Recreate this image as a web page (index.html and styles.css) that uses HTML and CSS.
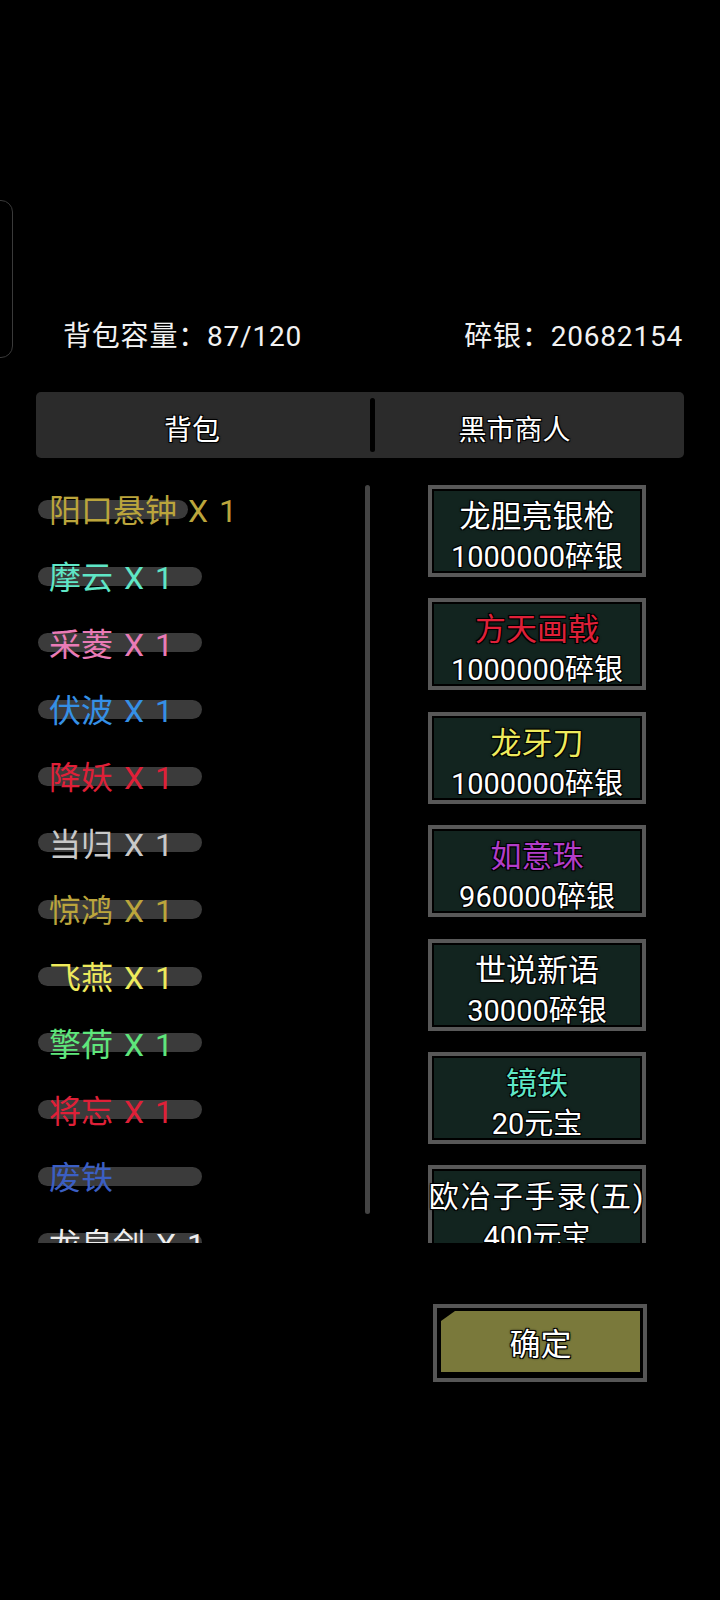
FILE: index.html
```html
<html>
<head>
    <meta charset="utf-8">
    <title>背包 - 黑市商人</title>
    <link rel="stylesheet" href="styles.css">
</head>
<body>
    <div class="edgeHandle"></div>

    <div class="stats">
        <div class="capacity">背包容量：87/120</div>
        <div class="silver">碎银：20682154</div>
    </div>

    <div class="tabs">
        <div class="tab tabBag">背包</div>
        <div class="tabDivider"></div>
        <div class="tab tabShop">黑市商人</div>
    </div>

    <div class="panel">
        <div class="list">
            <div class="item"><span class="pill pillShort"></span><span class="name gold">阳口悬钟 X 1</span></div>
            <div class="item"><span class="pill"></span><span class="name cyan">摩云 X 1</span></div>
            <div class="item"><span class="pill"></span><span class="name pink">采菱 X 1</span></div>
            <div class="item"><span class="pill"></span><span class="name blue">伏波 X 1</span></div>
            <div class="item"><span class="pill"></span><span class="name red">降妖 X 1</span></div>
            <div class="item"><span class="pill"></span><span class="name grey">当归 X 1</span></div>
            <div class="item"><span class="pill"></span><span class="name gold">惊鸿 X 1</span></div>
            <div class="item"><span class="pill"></span><span class="name yellow">飞燕 X 1</span></div>
            <div class="item"><span class="pill"></span><span class="name green">擎荷 X 1</span></div>
            <div class="item"><span class="pill"></span><span class="name red">将忘 X 1</span></div>
            <div class="item"><span class="pill"></span><span class="name navy">废铁</span></div>
            <div class="item"><span class="pill"></span><span class="name white">龙泉剑 X 1</span></div>
        </div>
        <div class="scrollbar"></div>

        <div class="shop">
            <div class="card">
                <div class="cardName">龙胆亮银枪</div>
                <div class="cardPrice">1000000碎银</div>
            </div>
            <div class="card">
                <div class="cardName red">方天画戟</div>
                <div class="cardPrice">1000000碎银</div>
            </div>
            <div class="card">
                <div class="cardName yellow">龙牙刀</div>
                <div class="cardPrice">1000000碎银</div>
            </div>
            <div class="card">
                <div class="cardName purple">如意珠</div>
                <div class="cardPrice">960000碎银</div>
            </div>
            <div class="card">
                <div class="cardName">世说新语</div>
                <div class="cardPrice">30000碎银</div>
            </div>
            <div class="card">
                <div class="cardName cyan">镜铁</div>
                <div class="cardPrice">20元宝</div>
            </div>
            <div class="card">
                <div class="cardName long">欧冶子手录(五)</div>
                <div class="cardPrice">400元宝</div>
            </div>
        </div>
    </div>

    <div class="actions">
        <div class="confirm">
            <div class="confirmFace">确定</div>
        </div>
    </div>
</body>
</html>
```

FILE: styles.css
```css
* {font-family: Roboto, "Noto Sans CJK SC", sans-serif;}
body {margin: 0; background-color: #000; color: #eee; width: 720px; height: 1600px; overflow: hidden;}

.edgeHandle {
    position: absolute;
    left: -20px;
    top: 200px;
    width: 31px;
    height: 156px;
    border: 1px solid #3a3a3a;
    border-radius: 12px;
}

.stats {
    display: flex;
    justify-content: space-between;
    padding: 320px 37px 0 63px;
    font-size: 28px;
    letter-spacing: 0.8px;
    line-height: 34px;
    color: #f2f2f2;
}

.tabs {
    display: flex;
    align-items: center;
    margin: 38px 36px 0;
    height: 66px;
    background-color: #2b2b2b;
    border-radius: 5px;
}
.tab {
    font-size: 28px;
    color: #fff;
    text-align: center;
    padding-top: 6px;
    text-shadow: 1px 1px 0 #000, -1px -1px 0 #000, 1px -1px 0 #000, -1px 1px 0 #000, 0 0 3px #000;
}
.tabBag {width: 334px; padding-right: 22px; box-sizing: border-box;}
.tabShop {flex: 1; padding-right: 30px; box-sizing: border-box;}
.tabDivider {width: 5px; height: 54px; background-color: #000; border-radius: 3px;}

.panel {
    display: flex;
    margin-top: 18px;
    padding-left: 36px;
    height: 767px;
    overflow: hidden;
}
.list {width: 329px; overflow: hidden;}
.item {
    display: grid;
    align-items: center;
    height: 66.7px;
}
.item > span {grid-area: 1 / 1;}
.pill {
    margin-left: 2px;
    width: 164px;
    height: 19px;
    border-radius: 10px;
    background-color: #3b3b3b;
}
.pillShort {width: 150px;}
.name {
    position: relative;
    margin-left: 13px;
    padding-top: 4px;
    font-size: 32px;
    line-height: 40px;
    word-spacing: 3px;
    white-space: nowrap;
}
.scrollbar {
    width: 5px;
    height: 729px;
    margin-top: 9px;
    background-color: #444;
    border-radius: 3px;
}

.gold {color: #bba53c;}
.cyan {color: #5fe6c6;}
.pink {color: #ea7bb6;}
.blue {color: #3590e6;}
.red {color: #df2038;}
.grey {color: #c9c9c9;}
.yellow {color: #eeea5c;}
.green {color: #5fe67c;}
.navy {color: #3b5fc4;}
.white {color: #eee;}
.purple {color: #b23dc9;}

.shop {
    display: flex;
    flex-direction: column;
    gap: 21.4px;
    margin-left: 58px;
    padding-top: 9px;
    width: 218px;
}
.card {
    flex-shrink: 0;
    height: 92px;
    box-sizing: border-box;
    border: 4px solid #585858;
    background-color: #12241f;
    box-shadow: inset 0 0 0 2px #000;
    padding-top: 10px;
    text-align: center;
    color: #fff;
    text-shadow: 1px 1px 0 #000, -1px -1px 0 #000, 1px -1px 0 #000, -1px 1px 0 #000, 0 0 3px #000;
}
.cardName {font-size: 31px; line-height: 36px; margin-bottom: 4px; white-space: nowrap;}
.cardName.long {font-size: 30px; letter-spacing: 2px; margin-left: -8px; margin-right: -8px;}
.cardPrice {font-size: 29px; line-height: 36px; white-space: nowrap;}

.actions {
    display: flex;
    justify-content: flex-end;
    margin-top: 61px;
    padding-right: 73px;
}
.confirm {
    width: 214px;
    height: 78px;
    box-sizing: border-box;
    border: 4px solid #565656;
    background-color: #000;
    padding: 3px 3px 6px 4px;
}
.confirmFace {
    height: 100%;
    background-color: #7a793b;
    clip-path: polygon(14px 0, 100% 0, 100% 100%, 0 100%, 0 10px);
    display: flex;
    align-items: center;
    justify-content: center;
    font-size: 31px;
    color: #fff;
    text-shadow: 1px 1px 0 #000, -1px -1px 0 #000, 1px -1px 0 #000, -1px 1px 0 #000, 0 0 3px #000, 0 0 2px #000;
}
```
